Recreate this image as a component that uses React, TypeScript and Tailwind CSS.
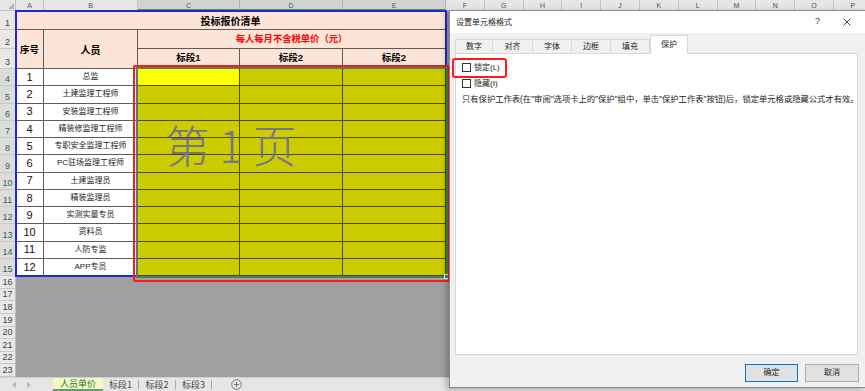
import React from "react";

const CJK = "font-['Noto_Sans_CJK_SC',sans-serif]";
const MIX = "font-['Liberation_Sans','Noto_Sans_CJK_SC',sans-serif]";

const people: [number, string][] = [
  [1, "总监"],
  [2, "土建监理工程师"],
  [3, "安装监理工程师"],
  [4, "精装修监理工程师"],
  [5, "专职安全监理工程师"],
  [6, "PC驻场监理工程师"],
  [7, "土建监理员"],
  [8, "精装监理员"],
  [9, "实测实量专员"],
  [10, "资料员"],
  [11, "人防专监"],
  [12, "APP专员"],
];

const extraCols = ["F", "G", "H", "I", "J", "K", "L", "M", "N", "O", "P"];

function ColumnHeader() {
  return (
    <div className={`flex h-[11px] bg-[#e6e6e6] border-b border-[#c3c3c3] text-[7px] leading-none text-[#505050] ${MIX}`}>
      <div className="w-[16px] shrink-0 border-r border-[#c3c3c3] relative">
        <svg className="absolute right-[1px] bottom-[1px]" width="6" height="6" viewBox="0 0 6 6">
          <path d="M6 0 L6 6 L0 6 Z" fill="#b8b8b8" />
        </svg>
      </div>
      <div className="w-[28px] shrink-0 border-r border-[#c3c3c3] flex items-center justify-center">A</div>
      <div className="w-[94px] shrink-0 border-r border-[#c3c3c3] flex items-center justify-center">B</div>
      <div className="w-[102px] shrink-0 border-r border-[#b0b0b0] bg-[#d3d3d3] text-[#2b6a45] flex items-center justify-center shadow-[inset_0_-1px_0_#4f8f68]">C</div>
      <div className="w-[103px] shrink-0 border-r border-[#b0b0b0] bg-[#d3d3d3] text-[#2b6a45] flex items-center justify-center shadow-[inset_0_-1px_0_#4f8f68]">D</div>
      <div className="w-[103px] shrink-0 border-r border-[#b0b0b0] bg-[#d3d3d3] text-[#2b6a45] flex items-center justify-center shadow-[inset_0_-1px_0_#4f8f68]">E</div>
      {extraCols.map((c) => (
        <div key={c} className="w-[38.8px] shrink-0 border-r border-[#c3c3c3] flex items-center justify-center">
          {c}
        </div>
      ))}
    </div>
  );
}

function RowHeaders() {
  const cell = "shrink-0 border-b border-[#c8c8c8] flex items-end justify-center pb-[1px] text-[9px] leading-none";
  return (
    <div className={`w-[16px] shrink-0 flex flex-col bg-[#e8e8e8] border-r border-[#bdbdbd] ${MIX}`}>
      <div className={`${cell} h-[19px] text-[#3f3f3f]`}>1</div>
      <div className={`${cell} h-[19px] text-[#3f3f3f]`}>2</div>
      <div className={`${cell} h-[20px] text-[#3f3f3f]`}>3</div>
      {people.map((p, i) => (
        <div key={i} className={`${cell} h-[17.25px] bg-[#dcdcdc] text-[#2f6a4a]`}>
          {i + 4}
        </div>
      ))}
      {[16, 17, 18, 19, 20, 21, 22, 23].map((n) => (
        <div key={n} className={`${cell} h-[12.625px] text-[#3f3f3f] items-center pb-0`}>
          {n}
        </div>
      ))}
    </div>
  );
}

function PrintArea() {
  const line = "border-r border-b border-[#5c5c5c]";
  return (
    <div className="relative w-[430px] h-[265px] bg-white outline-2 outline-[#2424dc] -outline-offset-1">
      <div className="grid grid-cols-[28px_94px_102px_103px_103px] grid-rows-[19px_19px_20px_repeat(12,17.25px)] w-full h-full">
        <div className={`col-span-5 bg-[#fce4d6] ${line} flex items-center justify-center text-[10px] font-bold text-black ${CJK}`}>
          投标报价清单
        </div>
        <div className={`row-span-2 bg-[#fce4d6] ${line} flex items-center justify-center text-[9.5px] font-bold text-black ${CJK}`}>
          序号
        </div>
        <div className={`row-span-2 bg-[#fce4d6] ${line} flex items-center justify-center text-[10px] font-bold text-black ${CJK}`}>
          人员
        </div>
        <div className={`col-span-3 bg-[#fce4d6] ${line} flex items-center justify-center text-[9.3px] font-bold text-[#ff0000] ${CJK}`}>
          每人每月不含税单价（元）
        </div>
        {["标段1", "标段2", "标段2"].map((t, i) => (
          <div key={i} className={`bg-[#fce4d6] ${line} flex items-center justify-center text-[9.5px] font-bold text-black ${MIX}`}>
            {t}
          </div>
        ))}
        {people.map(([n, name], i) => (
          <React.Fragment key={i}>
            <div className={`col-start-1 ${line} flex items-center justify-center text-[11px] text-[#111] ${MIX}`} style={{ gridRowStart: i + 4 }}>
              {n}
            </div>
            <div className={`col-start-2 ${line} flex items-center justify-center text-[8px] text-[#222] ${MIX}`} style={{ gridRowStart: i + 4 }}>
              {name}
            </div>
          </React.Fragment>
        ))}
        <div className="col-start-3 col-span-3 row-start-4 row-span-12 grid grid-cols-[102px_103px_103px] grid-rows-[repeat(12,17.25px)] outline-2 outline-[#4e8062] relative">
          {Array.from({ length: 36 }).map((_, k) => (
            <div
              key={k}
              className={`border-r border-b border-[#4a4a00] ${k === 0 ? "bg-[#ffff00]" : "bg-[#cccc00]"}`}
            />
          ))}
          <div className="absolute right-[-3px] bottom-[-3px] w-[5px] h-[5px] bg-[#3f7a58] border border-white" />
        </div>
      </div>
      <div className={`absolute inset-0 flex items-center justify-center pointer-events-none text-[44px] leading-none font-light text-[#74748a] ${CJK}`}>
        <span className="whitespace-pre">第 1 页</span>
      </div>
    </div>
  );
}

function SheetTabs() {
  return (
    <div className={`h-[14px] shrink-0 bg-[#e6e6e6] border-t border-[#cfcfcf] flex items-stretch text-[9px] leading-none ${CJK}`}>
      <div className="w-[53px] shrink-0 flex items-center">
        <svg className="ml-[12px]" width="4" height="6" viewBox="0 0 4 6">
          <path d="M4 0 L0 3 L4 6 Z" fill="#b5b5b5" />
        </svg>
        <svg className="ml-[11px]" width="4" height="6" viewBox="0 0 4 6">
          <path d="M0 0 L4 3 L0 6 Z" fill="#b5b5b5" />
        </svg>
      </div>
      <div className="w-[50px] shrink-0 bg-[#f6f7c4] border-b-2 border-[#5e9e76] flex items-center justify-center text-[#1f7145]">
        人员单价
      </div>
      <div className="w-[36px] shrink-0 flex items-center justify-center text-[#444] border-r border-[#a8a8a8] my-[2px]">标段1</div>
      <div className="w-[37px] shrink-0 flex items-center justify-center text-[#444] border-r border-[#a8a8a8] my-[2px]">标段2</div>
      <div className="w-[36px] shrink-0 flex items-center justify-center text-[#444] border-r border-[#a8a8a8] my-[2px]">标段3</div>
      <div className="ml-[19px] flex items-center">
        <svg width="11" height="11" viewBox="0 0 11 11">
          <circle cx="5.5" cy="5.5" r="4.8" fill="none" stroke="#6a6a6a" strokeWidth="0.9" />
          <path d="M5.5 3 V8 M3 5.5 H8" stroke="#6a6a6a" strokeWidth="0.9" />
        </svg>
      </div>
    </div>
  );
}

function Dialog() {
  const tab = "h-[14px] shrink-0 border border-b-0 border-[#d9d9d9] bg-[#f0f0f0] flex items-center justify-center text-[8px] text-[#222]";
  return (
    <div className={`absolute left-[449px] top-[10px] w-[417px] h-[378px] bg-[#f0f0f0] border border-[#8a8a8a] shadow-[-3px_2px_6px_rgba(0,0,0,0.25)] flex flex-col ${MIX}`}>
      <div className="h-[22px] shrink-0 bg-white flex items-center pl-[6px] text-[8px] text-[#222]">
        <span className={CJK}>设置单元格格式</span>
        <span className="ml-auto mr-[23px] text-[9px] text-[#333]">?</span>
        <svg className="mr-[14px]" width="8" height="8" viewBox="0 0 8 8">
          <path d="M0.5 0.5 L7.5 7.5 M7.5 0.5 L0.5 7.5" stroke="#333" strokeWidth="0.9" />
        </svg>
      </div>
      <div className="pl-[5px] flex flex-col">
        <div className="h-[20px] flex items-end relative z-10">
          <div className={`${tab} w-[38px]`}>数字</div>
          <div className={`${tab} w-[40px] border-l-0`}>对齐</div>
          <div className={`${tab} w-[39px] border-l-0`}>字体</div>
          <div className={`${tab} w-[39px] border-l-0`}>边框</div>
          <div className={`${tab} w-[39px] border-l-0`}>填充</div>
          <div className="h-[19px] w-[38px] shrink-0 border border-b-0 border-[#d9d9d9] bg-white flex items-center justify-center text-[8px] text-[#222] mb-[-1px]">
            保护
          </div>
        </div>
        <div className="w-[403px] h-[302px] bg-white border border-[#d9d9d9] pl-[6px] pt-[5.5px] text-[8px] text-[#222] leading-none">
          <div className="h-[16px] flex items-center">
            <div className="w-[9px] h-[9px] border border-[#333] bg-white" />
            <span className="ml-[3px]">锁定(L)</span>
          </div>
          <div className="h-[16px] flex items-center">
            <div className="w-[9px] h-[9px] border border-[#333] bg-white" />
            <span className="ml-[3px]">隐藏(I)</span>
          </div>
          <div className="h-[16px] flex items-center whitespace-nowrap text-[8.3px]">
            只有保护工作表(在"审阅"选项卡上的"保护"组中，单击"保护工作表"按钮)后，锁定单元格或隐藏公式才有效。
          </div>
        </div>
        <div className="flex justify-end gap-[7px] pr-[6px] mt-[9px]">
          <div className="w-[53px] h-[18px] bg-[#e1e1e1] border border-[#0078d7] flex items-center justify-center text-[8px] text-[#222]">
            确定
          </div>
          <div className="w-[54px] h-[18px] bg-[#e1e1e1] border border-[#adadad] flex items-center justify-center text-[8px] text-[#222]">
            取消
          </div>
        </div>
      </div>
    </div>
  );
}

export default function App() {
  return (
    <div className="relative w-[865px] h-[391px] overflow-hidden bg-[#a0a0a0] flex flex-col">
      <ColumnHeader />
      <div className="flex h-[366px] shrink-0">
        <RowHeaders />
        <div className="flex-1 bg-[#a0a0a0]">
          <PrintArea />
        </div>
      </div>
      <SheetTabs />
      <div className="absolute left-[133px] top-[65px] w-[317px] h-[217px] border-2 border-[#ff1a1a] rounded-[2px] pointer-events-none" />
      <Dialog />
      <div className="absolute left-[452px] top-[58px] w-[55px] h-[20px] border-2 border-[#ff1a1a] rounded-[3px] pointer-events-none" />
    </div>
  );
}
